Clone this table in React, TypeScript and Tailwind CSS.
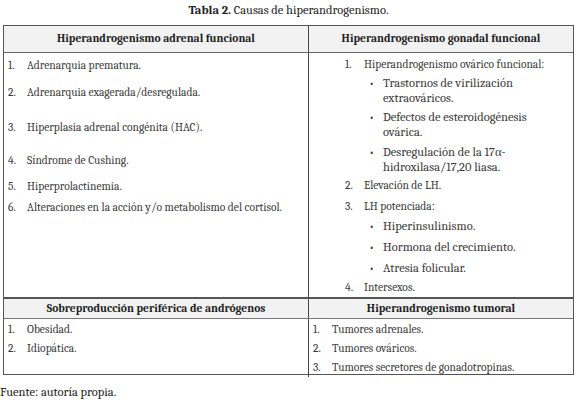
type Num = { n: string; text: string; mt: string };
type Line = { kind: "num"; n: string; text: string; mt: string } | { kind: "bullet"; lines: string[]; mt: string };

const adrenal: Num[] = [
  { n: "1.", text: "Adrenarquia prematura.", mt: "mt-[6px]" },
  { n: "2.", text: "Adrenarquia exagerada/desregulada.", mt: "mt-[13px]" },
  { n: "3.", text: "Hiperplasia adrenal congénita (HAC).", mt: "mt-[21px]" },
  { n: "4.", text: "Síndrome de Cushing.", mt: "mt-[19px]" },
  { n: "5.", text: "Hiperprolactinemia.", mt: "mt-[12px]" },
  { n: "6.", text: "Alteraciones en la acción y/o metabolismo del cortisol.", mt: "mt-[7px]" },
];

const gonadal: Line[] = [
  { kind: "num", n: "1.", text: "Hiperandrogenismo ovárico funcional:", mt: "mt-[5px]" },
  { kind: "bullet", lines: ["Trastornos de virilización", "extraováricos."], mt: "mt-[4px]" },
  { kind: "bullet", lines: ["Defectos de esteroidogénesis", "ovárica."], mt: "mt-[4px]" },
  { kind: "bullet", lines: ["Desregulación de la 17α-", "hidroxilasa/17,20 liasa."], mt: "mt-[5px]" },
  { kind: "num", n: "2.", text: "Elevación de LH.", mt: "mt-[4px]" },
  { kind: "num", n: "3.", text: "LH potenciada:", mt: "mt-[7px]" },
  { kind: "bullet", lines: ["Hiperinsulinismo."], mt: "mt-[5px]" },
  { kind: "bullet", lines: ["Hormona del crecimiento."], mt: "mt-[6px]" },
  { kind: "bullet", lines: ["Atresia folicular."], mt: "mt-[6px]" },
  { kind: "num", n: "4.", text: "Intersexos.", mt: "mt-[5px]" },
];

function NumItem({ n, text, mt, pl }: { n: string; text: string; mt: string; pl: string }) {
  return (
    <div className={`flex text-[11.5px] leading-[14px] text-[#3a3a3a] ${mt} ${pl}`}>
      <span className="w-[19px] shrink-0">{n}</span>
      <span>{text}</span>
    </div>
  );
}

function Row({ n, text }: { n: string; text: string }) {
  return (
    <div className="flex pl-[4px]">
      <span className="w-[19px] shrink-0">{n}</span>
      <span>{text}</span>
    </div>
  );
}

export default function App() {
  return (
    <div className="w-[577px] h-[404px] bg-white font-serif [font-family:'Liberation_Serif','Times_New_Roman',Georgia,serif]">
      <div className="pt-[3px] text-center text-[12.5px] leading-[15px] text-[#222]">
        <span className="font-bold">Tabla 2.</span> Causas de hiperandrogenismo.
      </div>

      <div className="mx-[3px] mt-[7px] w-[571px] border border-[#555]">
        <div className="grid grid-cols-[305px_1fr] bg-[#f2f2f2] border-b border-[#666] h-[27px] items-center text-[11.5px] font-bold text-[#1e1e1e]">
          <div className="text-center border-r-[1.5px] border-[#444] h-full flex items-center justify-center">
            Hiperandrogenismo adrenal funcional
          </div>
          <div className="text-center">Hiperandrogenismo gonadal funcional</div>
        </div>

        <div className="grid grid-cols-[305px_1fr] h-[244px]">
          <div className="border-r-[1.5px] border-[#444]">
            {adrenal.map((a) => (
              <NumItem key={a.n} n={a.n} text={a.text} mt={a.mt} pl="pl-[4px]" />
            ))}
          </div>
          <div>
            {gonadal.map((g, i) =>
              g.kind === "num" ? (
                <NumItem key={i} n={g.n} text={g.text} mt={g.mt} pl="pl-[36px]" />
              ) : (
                <div key={i} className={`flex pl-[60px] text-[12.5px] leading-[15px] text-[#3a3a3a] ${g.mt}`}>
                  <span className="w-[14px] shrink-0 text-[12px]">•</span>
                  <div>
                    {g.lines.map((l) => (
                      <div key={l}>{l}</div>
                    ))}
                  </div>
                </div>
              )
            )}
          </div>
        </div>

        <div className="grid grid-cols-[305px_1fr] bg-[#f2f2f2] border-t-2 border-b border-t-[#555] border-b-[#777] h-[22px] items-center text-[11.5px] font-bold text-[#1e1e1e]">
          <div className="text-center border-r-[1.5px] border-[#444] h-full flex items-center justify-center">
            Sobreproducción periférica de andrógenos
          </div>
          <div className="text-center">Hiperandrogenismo tumoral</div>
        </div>

        <div className="grid grid-cols-[305px_1fr] h-[55px] pt-[1px] text-[11.5px] leading-[19px] text-[#3a3a3a]">
          <div className="border-r-[1.5px] border-[#444] -mt-[1px] pt-[1px]">
            <Row n="1." text="Obesidad." />
            <Row n="2." text="Idiopática." />
          </div>
          <div>
            <Row n="1." text="Tumores adrenales." />
            <Row n="2." text="Tumores ováricos." />
            <Row n="3." text="Tumores secretores de gonadotropinas." />
          </div>
        </div>
      </div>

      <div className="mt-[10px] text-[12.5px] leading-[15px] text-[#222]">Fuente: autoría propia.</div>
    </div>
  );
}
